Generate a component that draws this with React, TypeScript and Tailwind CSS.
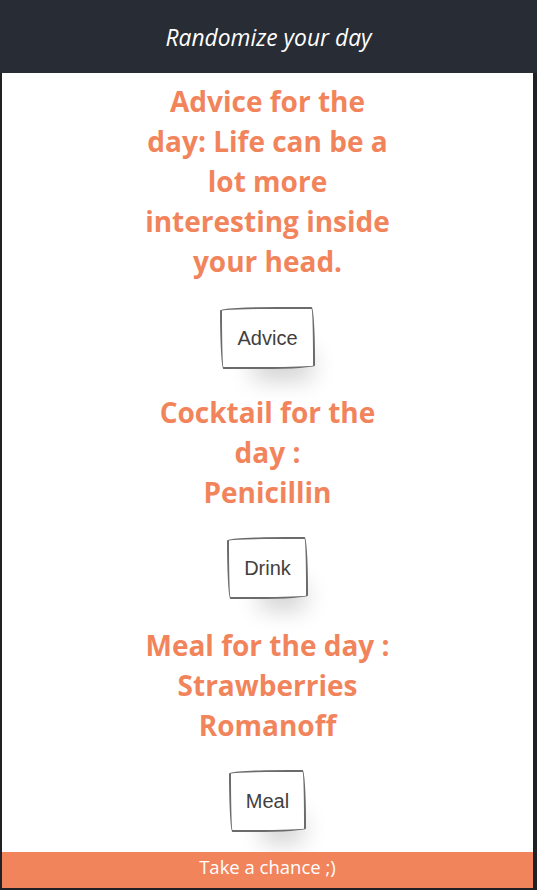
import React from "react";

const headingCls =
  "w-[252px] mx-auto text-center font-bold text-[28px] leading-[40px] text-[#f2845c] [font-family:'Open_Sans',sans-serif]";

const btnCls =
  "mx-auto block bg-white border-2 border-[#6b6b6b] text-[#41403e] text-[20px] leading-[24px] px-[15px] py-[17px] rounded-[255px_15px_225px_15px/15px_225px_15px_255px] shadow-[15px_28px_25px_-18px_rgba(0,0,0,0.2)] [font-family:'Liberation_Sans',Arial,sans-serif]";

export default function App() {
  return (
    <div className="h-[890px] flex flex-col bg-[#202124]">
      <header className="h-[73px] shrink-0 bg-[#282c34] flex items-center justify-center">
        <span className="text-white italic text-[22.8px] leading-[30px] [font-family:'Open_Sans',sans-serif] pt-[3px]">
          Randomize your day
        </span>
      </header>
      <div className="flex-1 flex flex-col bg-white ml-[2px] mr-[4px] mb-[2px]">
        <main className="flex-1 flex flex-col pt-[8px]">
          <h1 className={headingCls}>
            Advice for the day: Life can be a lot more interesting inside your head.
          </h1>
          <div className="mt-[26px]">
            <button className={btnCls}>Advice</button>
          </div>
          <h1 className={headingCls + " mt-[23px]"}>
            Cocktail for the day :<br />Penicillin
          </h1>
          <div className="mt-[25px]">
            <button className={btnCls}>Drink</button>
          </div>
          <h1 className={headingCls + " mt-[26px]"}>
            Meal for the day :<br />Strawberries Romanoff
          </h1>
          <div className="mt-[25px]">
            <button className={btnCls}>Meal</button>
          </div>
        </main>
        <footer className="h-[36px] shrink-0 bg-[#f2845c] flex items-center justify-center text-white text-[18.5px] leading-[24px] pb-[7px] [font-family:'Open_Sans',sans-serif]">
          Take a chance ;)
        </footer>
      </div>
    </div>
  );
}
